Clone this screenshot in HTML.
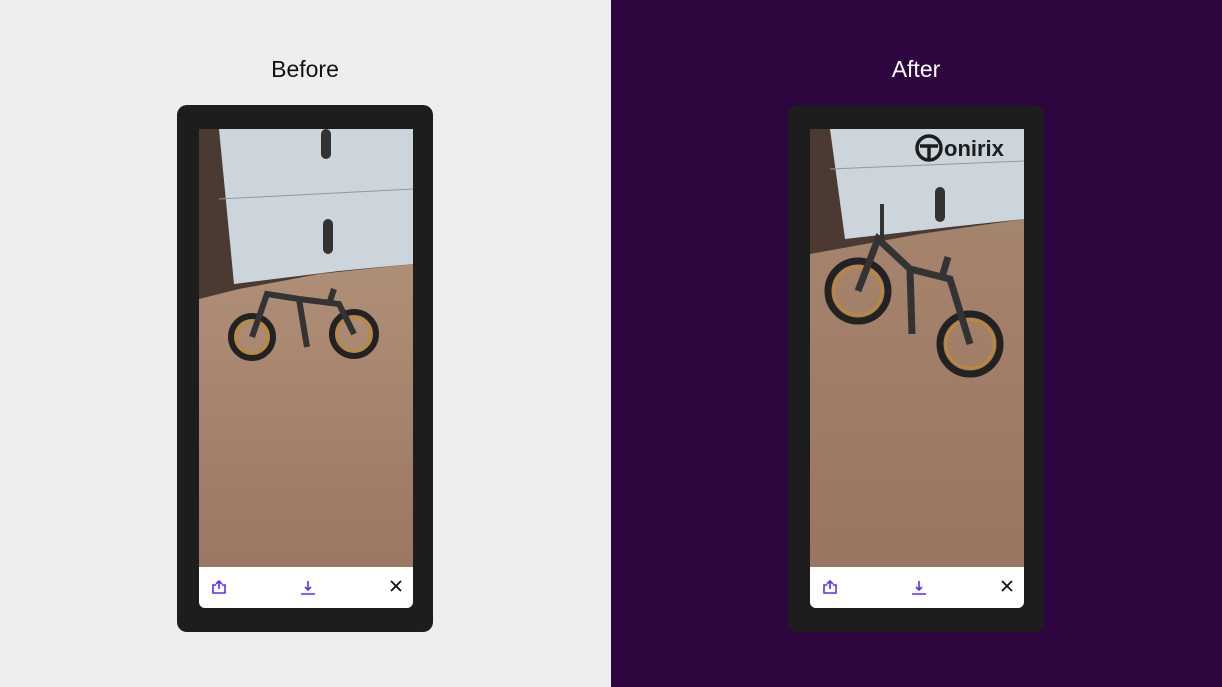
<!DOCTYPE html>
<html><head><meta charset="utf-8"><style>
body{margin:0;width:1222px;height:687px;position:relative;overflow:hidden;font-family:"Liberation Sans",sans-serif}
.l{position:absolute;left:0;top:0;width:611px;height:687px;background:#eeeef0}
.r{position:absolute;left:611px;top:0;width:611px;height:687px;background:#2d0640}
.t{position:absolute;top:56px;font-size:23px;width:200px;text-align:center}
.ph{position:absolute;top:105px;width:256px;height:527px;background:#1d1d1d;border-radius:10px;overflow:hidden}
.scr{position:absolute;top:24px;left:22px;width:214px;height:438px;overflow:hidden}
.bar{position:absolute;top:462px;left:22px;width:214px;height:41px;background:#fff;border-radius:0 0 6px 6px}
.ic{position:absolute;top:12px}
</style></head><body>
<div class="l"></div><div class="r"></div>
<div class="t" style="left:205px;color:#111">Before</div>
<div class="t" style="left:816px;color:#fff">After</div>

<div class="ph" style="left:177px">
 <div class="scr">
  <svg width="214" height="438" viewBox="0 0 214 438">
   <defs><linearGradient id="f" x1="0" y1="0" x2="0" y2="1"><stop offset="0" stop-color="#b8997f"/><stop offset="1" stop-color="#9c7764"/></linearGradient></defs>
   <rect width="214" height="438" fill="url(#f)"/>
   <polygon points="0,0 214,0 214,135 120,145 40,160 0,170" fill="#4a3a32"/>
   <polygon points="20,0 214,0 214,135 140,142 35,155" fill="#ccd5dc"/>
   <line x1="20" y1="70" x2="214" y2="60" stroke="#8d98a2"/>
   <rect x="122" y="0" width="10" height="30" rx="5" fill="#333"/>
   <rect x="124" y="90" width="10" height="35" rx="5" fill="#333"/>
   <g fill="none" stroke="#222" stroke-width="6"><circle cx="53" cy="208" r="21"/><circle cx="155" cy="205" r="22"/></g>
   <g fill="none" stroke="#c08a2a" stroke-width="2"><circle cx="53" cy="208" r="16"/><circle cx="155" cy="205" r="17"/></g>
   <path d="M53 208 L68 165 L100 170 L140 175 L155 205 M100 170 L108 218 M130 175 L135 160" stroke="#333" stroke-width="6" fill="none"/>
  </svg>
 </div>
 <div class="bar">
  <svg class="ic" style="left:12px" width="16" height="16" viewBox="0 0 16 16" fill="none" stroke="#5a2cff" stroke-width="1.6"><path d="M5 6H2v8h12V6h-3M8 10V2M5 5l3-3 3 3"/></svg>
  <svg class="ic" style="left:101px" width="16" height="16" viewBox="0 0 16 16" fill="none" stroke="#5a2cff" stroke-width="1.6"><path d="M8 2v9M5 8l3 3 3-3M1 15h14"/></svg>
  <svg class="ic" style="left:190px" width="14" height="14" viewBox="0 0 14 14" stroke="#111" stroke-width="1.8"><path d="M2 2l10 10M12 2L2 12"/></svg>
 </div>
</div>

<div class="ph" style="left:788px">
 <div class="scr">
  <svg width="214" height="438" viewBox="0 0 214 438">
   <defs><linearGradient id="g" x1="0" y1="0" x2="0" y2="1"><stop offset="0" stop-color="#a88870"/><stop offset="1" stop-color="#9a7562"/></linearGradient></defs>
   <rect width="214" height="438" fill="url(#g)"/>
   <polygon points="0,0 214,0 214,90 110,105 0,125" fill="#4a3a32"/>
   <polygon points="20,0 214,0 214,90 140,98 35,110" fill="#ccd5dc"/>
   <line x1="20" y1="40" x2="214" y2="32" stroke="#8d98a2"/>
   <rect x="125" y="58" width="10" height="35" rx="5" fill="#333"/>
   <g fill="none" stroke="#222" stroke-width="7"><circle cx="48" cy="162" r="30"/><circle cx="160" cy="215" r="30"/></g>
   <g fill="none" stroke="#c08a2a" stroke-width="2"><circle cx="48" cy="162" r="24"/><circle cx="160" cy="215" r="24"/></g>
   <path d="M48 162 L68 110 L100 140 L140 150 L160 215 M100 140 L102 205 M132 148 L138 128" stroke="#333" stroke-width="7" fill="none"/>
   <path d="M72 115 L72 75" stroke="#333" stroke-width="4"/>
   <circle cx="119" cy="19" r="12" fill="none" stroke="#1d1d1d" stroke-width="3.5"/>
   <path d="M110 17h18M119 17v13" stroke="#1d1d1d" stroke-width="3.5"/>
   <text x="134" y="27" font-family="Liberation Sans" font-weight="bold" font-size="22" fill="#1d1d1d">onirix</text>
  </svg>
 </div>
 <div class="bar">
  <svg class="ic" style="left:12px" width="16" height="16" viewBox="0 0 16 16" fill="none" stroke="#5a2cff" stroke-width="1.6"><path d="M5 6H2v8h12V6h-3M8 10V2M5 5l3-3 3 3"/></svg>
  <svg class="ic" style="left:101px" width="16" height="16" viewBox="0 0 16 16" fill="none" stroke="#5a2cff" stroke-width="1.6"><path d="M8 2v9M5 8l3 3 3-3M1 15h14"/></svg>
  <svg class="ic" style="left:190px" width="14" height="14" viewBox="0 0 14 14" stroke="#111" stroke-width="1.8"><path d="M2 2l10 10M12 2L2 12"/></svg>
 </div>
</div>
</body></html>
